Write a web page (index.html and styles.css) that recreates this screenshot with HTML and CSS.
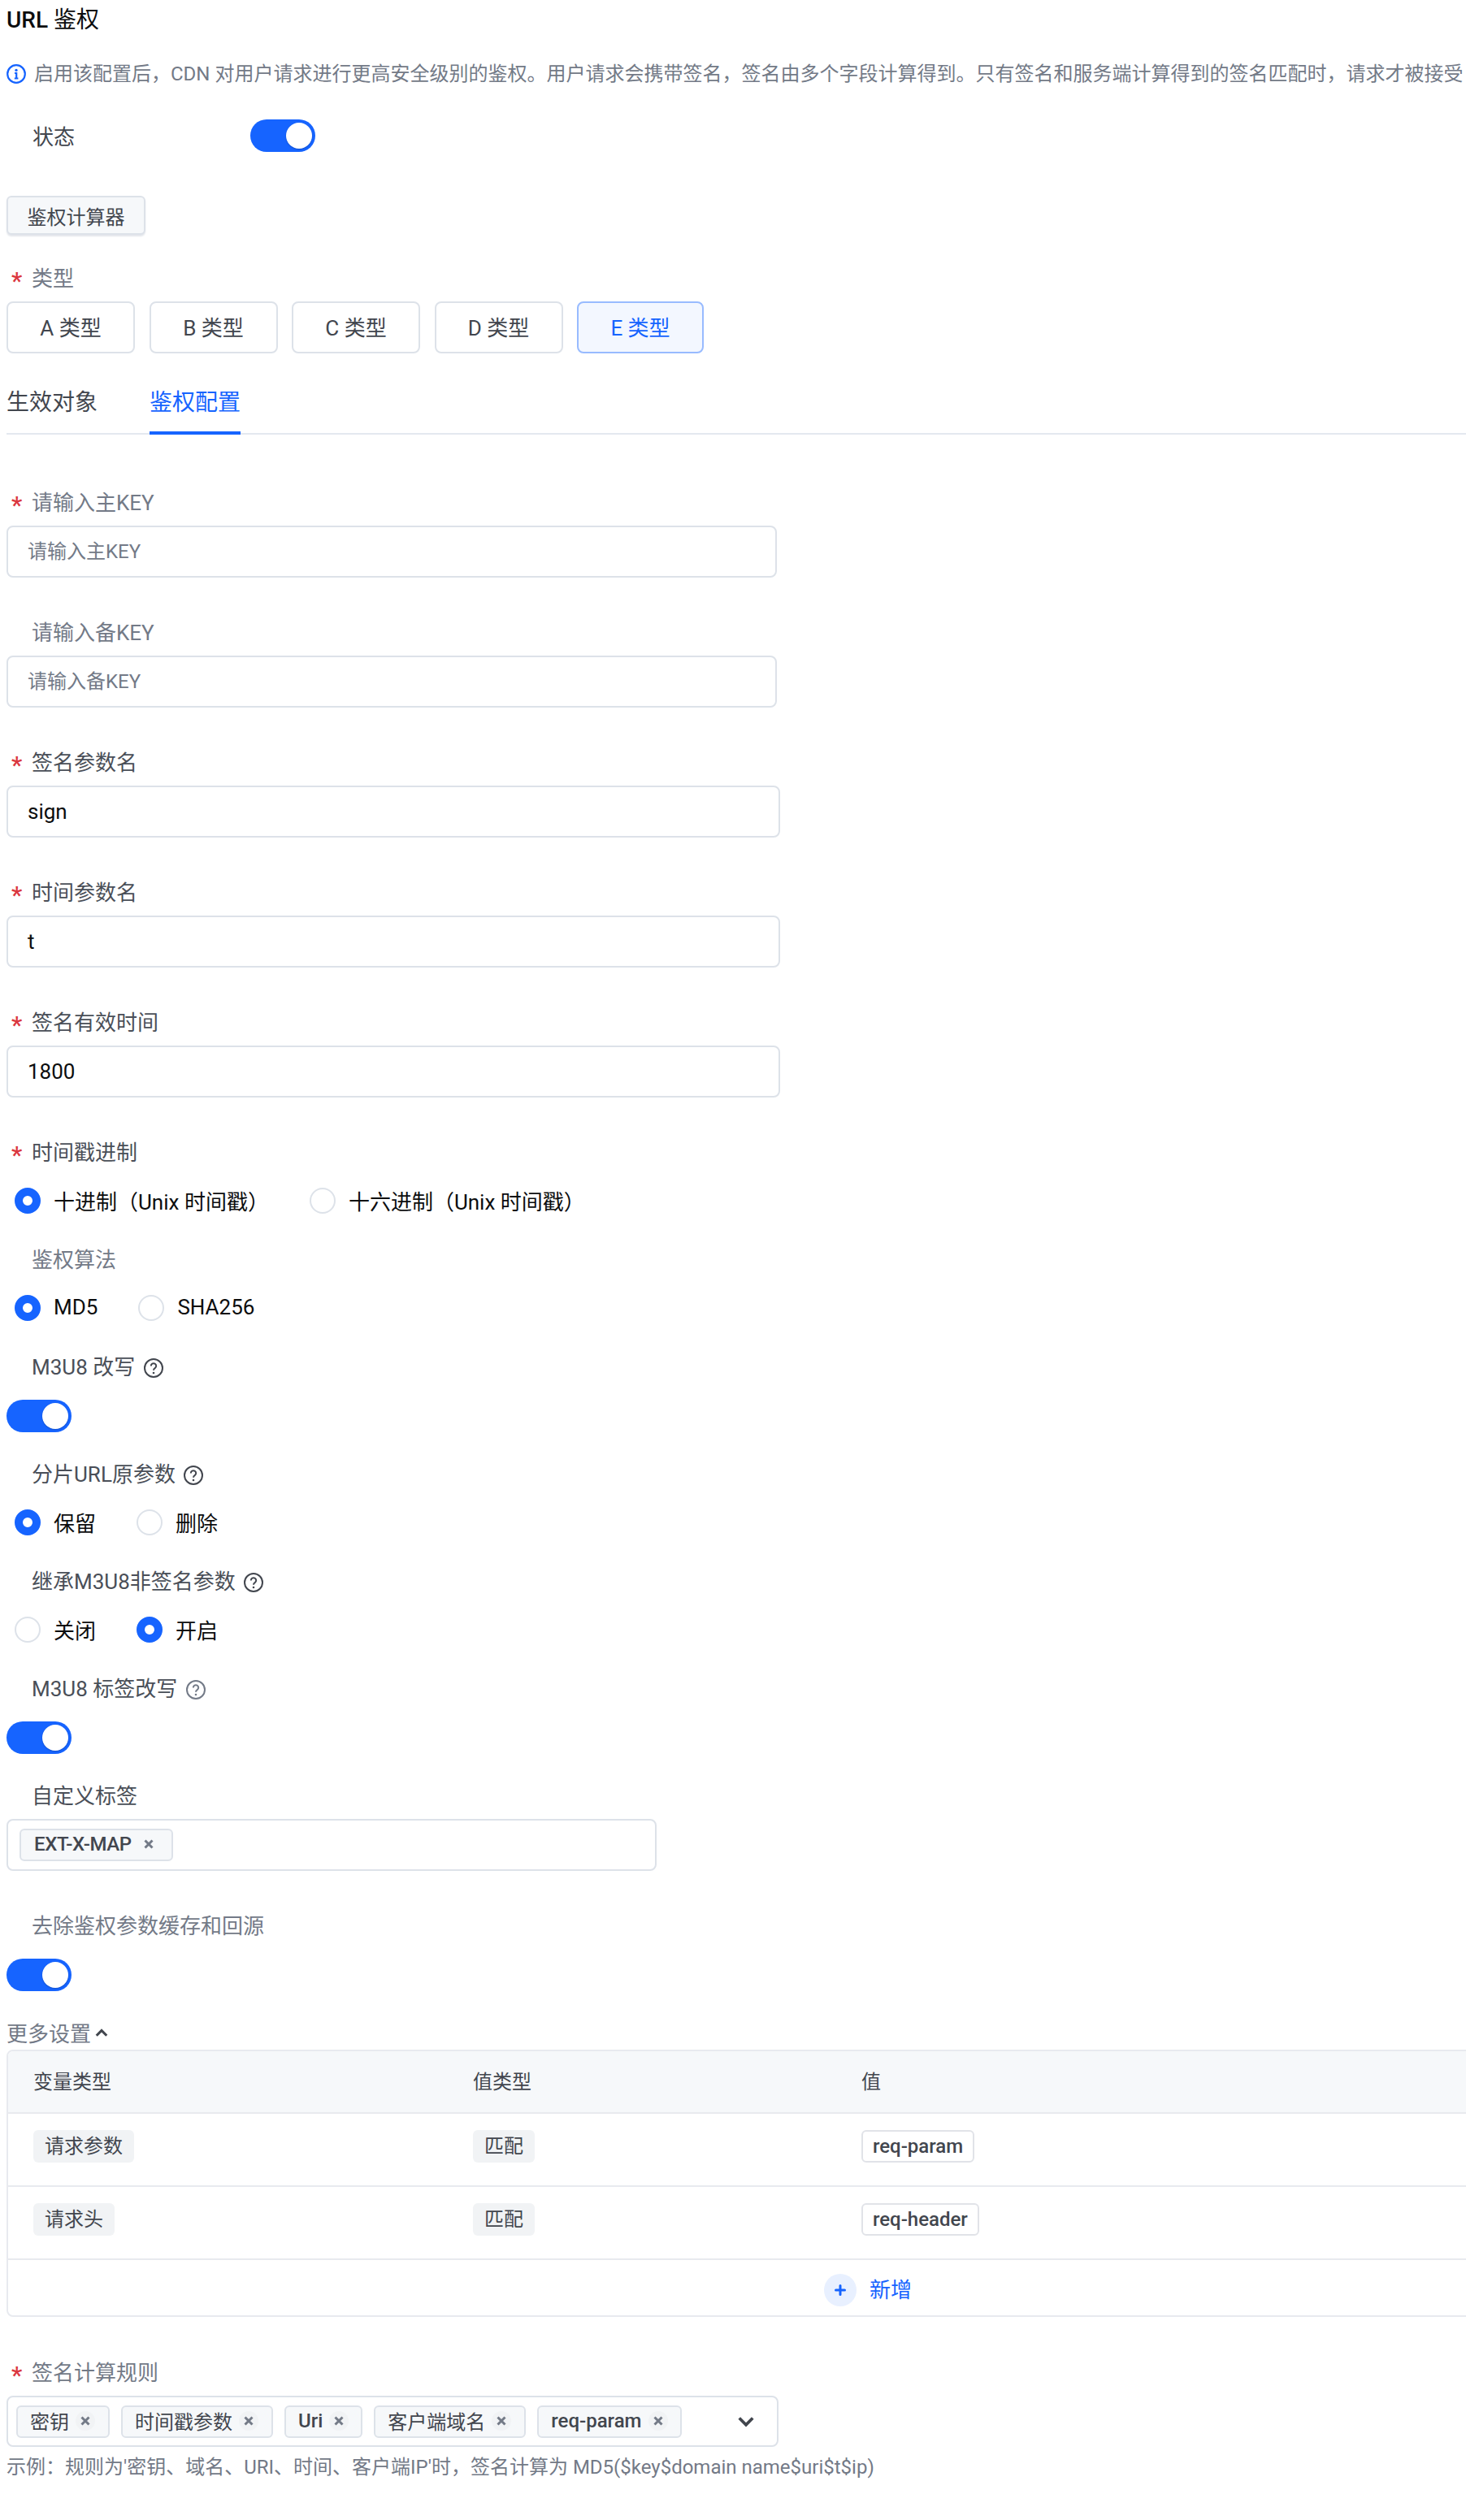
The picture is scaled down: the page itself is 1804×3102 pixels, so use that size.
FILE: index.html
```html
<!DOCTYPE html>
<html lang="zh-CN">
    <head>
        <meta charset="utf-8">
        <title>URL 鉴权</title>
        <meta name="viewport" content="width=device-width, initial-scale=1.0">
        <link rel="stylesheet" href="styles.css">
    </head>
    <body>
        <main class="page">
            <h1 class="title"><span class="title-latin">URL</span> 鉴权</h1>

            <p class="notice">
                <svg class="notice-icon" viewBox="0 0 24 24"><circle cx="12" cy="12" r="10.800" fill="none" stroke="#1664ff" stroke-width="2.200"/><circle cx="12" cy="7.400" r="1.700" fill="#1664ff"/><path d="M10 11h2.200v6.500M9.800 17.500h4.600" fill="none" stroke="#1664ff" stroke-width="2.200"/></svg>
                启用该配置后，CDN 对用户请求进行更高安全级别的鉴权。用户请求会携带签名，签名由多个字段计算得到。只有签名和服务端计算得到的签名匹配时，请求才被接受
            </p>

            <div class="status-row">
                <span class="status-label">状态</span>
                <span class="switch"><span class="knob"></span></span>
            </div>

            <button class="calc-btn">鉴权计算器</button>

            <div class="label label-type required">类型</div>
            <div class="type-list">
                <button class="type-btn">A 类型</button>
                <button class="type-btn">B 类型</button>
                <button class="type-btn">C 类型</button>
                <button class="type-btn">D 类型</button>
                <button class="type-btn type-active">E 类型</button>
            </div>

            <nav class="tabs">
                <a class="tab">生效对象</a>
                <a class="tab tab-active">鉴权配置</a>
            </nav>

            <section class="form">
                <div class="item">
                    <div class="label required">请输入主KEY</div>
                    <div class="input input-key placeholder">请输入主KEY</div>
                </div>
                <div class="item">
                    <div class="label">请输入备KEY</div>
                    <div class="input input-key placeholder">请输入备KEY</div>
                </div>
                <div class="item">
                    <div class="label dark required">签名参数名</div>
                    <div class="input">sign</div>
                </div>
                <div class="item">
                    <div class="label dark required">时间参数名</div>
                    <div class="input">t</div>
                </div>
                <div class="item">
                    <div class="label dark required">签名有效时间</div>
                    <div class="input">1800</div>
                </div>

                <div class="item item-radio">
                    <div class="label dark required">时间戳进制</div>
                    <div class="radios">
                        <label class="radio-opt"><span class="radio radio-on"></span>十进制（Unix 时间戳）</label>
                        <label class="radio-opt"><span class="radio"></span>十六进制（Unix 时间戳）</label>
                    </div>
                </div>
                <div class="item item-radio">
                    <div class="label">鉴权算法</div>
                    <div class="radios">
                        <label class="radio-opt"><span class="radio radio-on"></span>MD5</label>
                        <label class="radio-opt"><span class="radio"></span>SHA256</label>
                    </div>
                </div>
                <div class="item item-radio">
                    <div class="label dark">M3U8 改写 <svg class="help" viewBox="0 0 24 24"><circle cx="12" cy="12" r="11" fill="none" stroke="currentColor" stroke-width="2"/><path d="M8.800 9.400a3.200 3.200 0 1 1 4.900 2.700c-1.100 .7-1.700 1.300-1.700 2.600" fill="none" stroke="currentColor" stroke-width="2"/><circle cx="12" cy="18" r="1.300" fill="currentColor"/></svg></div>
                    <div class="switch-line"><span class="switch"><span class="knob"></span></span></div>
                </div>
                <div class="item item-radio">
                    <div class="label dark">分片URL原参数 <svg class="help" viewBox="0 0 24 24"><circle cx="12" cy="12" r="11" fill="none" stroke="currentColor" stroke-width="2"/><path d="M8.800 9.400a3.200 3.200 0 1 1 4.900 2.700c-1.100 .7-1.700 1.300-1.700 2.600" fill="none" stroke="currentColor" stroke-width="2"/><circle cx="12" cy="18" r="1.300" fill="currentColor"/></svg></div>
                    <div class="radios">
                        <label class="radio-opt"><span class="radio radio-on"></span>保留</label>
                        <label class="radio-opt"><span class="radio"></span>删除</label>
                    </div>
                </div>
                <div class="item item-radio">
                    <div class="label dark">继承M3U8非签名参数 <svg class="help" viewBox="0 0 24 24"><circle cx="12" cy="12" r="11" fill="none" stroke="currentColor" stroke-width="2"/><path d="M8.800 9.400a3.200 3.200 0 1 1 4.900 2.700c-1.100 .7-1.700 1.300-1.700 2.600" fill="none" stroke="currentColor" stroke-width="2"/><circle cx="12" cy="18" r="1.300" fill="currentColor"/></svg></div>
                    <div class="radios">
                        <label class="radio-opt"><span class="radio"></span>关闭</label>
                        <label class="radio-opt"><span class="radio radio-on"></span>开启</label>
                    </div>
                </div>
                <div class="item item-radio">
                    <div class="label dark">M3U8 标签改写 <svg class="help help-light" viewBox="0 0 24 24"><circle cx="12" cy="12" r="11" fill="none" stroke="currentColor" stroke-width="2"/><path d="M8.800 9.400a3.200 3.200 0 1 1 4.900 2.700c-1.100 .7-1.700 1.300-1.700 2.600" fill="none" stroke="currentColor" stroke-width="2"/><circle cx="12" cy="18" r="1.300" fill="currentColor"/></svg></div>
                    <div class="switch-line"><span class="switch"><span class="knob"></span></span></div>
                </div>
                <div class="item item-tags">
                    <div class="label dark">自定义标签</div>
                    <div class="tag-input">
                        <span class="chip chip-strong">EXT-X-MAP<svg class="close" viewBox="0 0 12 12"><path d="M1.500 1.500l9 9M10.500 1.500l-9 9"/></svg></span>
                    </div>
                </div>
                <div class="item item-radio">
                    <div class="label">去除鉴权参数缓存和回源</div>
                    <div class="switch-line"><span class="switch"><span class="knob"></span></span></div>
                </div>
            </section>

            <div class="more">更多设置<svg class="more-arrow" viewBox="0 0 16 16"><path d="M3 11l5-5 5 5"/></svg></div>

            <div class="table-wrap">
                <table class="vars">
                    <thead>
                        <tr><th class="col-a">变量类型</th><th class="col-b">值类型</th><th>值</th></tr>
                    </thead>
                    <tbody>
                        <tr>
                            <td><span class="tag">请求参数</span></td>
                            <td><span class="tag">匹配</span></td>
                            <td><span class="tag tag-line">req-param</span></td>
                        </tr>
                        <tr>
                            <td><span class="tag">请求头</span></td>
                            <td><span class="tag">匹配</span></td>
                            <td><span class="tag tag-line">req-header</span></td>
                        </tr>
                    </tbody>
                </table>
                <div class="add-row">
                    <span class="add-icon"><svg viewBox="0 0 14 14"><path d="M7 1.500v11M1.500 7h11"/></svg></span>
                    <span class="add-text">新增</span>
                </div>
            </div>

            <div class="label label-rule required">签名计算规则</div>
            <div class="rule-select">
                <span class="chip">密钥<span class="close-bg"><svg class="close" viewBox="0 0 12 12"><path d="M1.500 1.500l9 9M10.500 1.500l-9 9"/></svg></span></span>
                <span class="chip">时间戳参数<span class="close-bg"><svg class="close" viewBox="0 0 12 12"><path d="M1.500 1.500l9 9M10.500 1.500l-9 9"/></svg></span></span>
                <span class="chip chip-latin">Uri<span class="close-bg"><svg class="close" viewBox="0 0 12 12"><path d="M1.500 1.500l9 9M10.500 1.500l-9 9"/></svg></span></span>
                <span class="chip">客户端域名<span class="close-bg"><svg class="close" viewBox="0 0 12 12"><path d="M1.500 1.500l9 9M10.500 1.500l-9 9"/></svg></span></span>
                <span class="chip chip-latin">req-param<span class="close-bg"><svg class="close" viewBox="0 0 12 12"><path d="M1.500 1.500l9 9M10.500 1.500l-9 9"/></svg></span></span>
                <svg class="caret" viewBox="0 0 16 16"><path d="M2.500 5l5.500 5.500 5.500-5.500"/></svg>
            </div>
            <p class="hint">示例：规则为'密钥、域名、URI、时间、客户端IP'时，签名计算为 MD5($key$domain name$uri$t$ip)</p>
        </main>
    </body>
</html>
```

FILE: styles.css
```css
* {
    box-sizing: border-box;
}

html, body {
    margin: 0;
    background: #fff;
}

html {
    overflow: hidden;
}

body {
    font-family: Roboto, "Noto Sans CJK SC", sans-serif;
    font-size: 26px;
    color: #0c0d0e;
}

.page {
    width: 1804px;
    height: 3102px;
    padding: 0 0 0 8px;
    overflow: hidden;
}

.title {
    margin: 0;
    height: 48px;
    font-size: 28px;
    font-weight: 400;
    line-height: 50px;
}

.title-latin {
    font-weight: 500;
}

.notice {
    display: flex;
    align-items: center;
    gap: 10px;
    margin: 23px 0 0;
    height: 40px;
    line-height: 40px;
    font-size: 24px;
    color: #737a87;
    white-space: nowrap;
}

.notice-icon {
    width: 24px;
    height: 24px;
    flex: none;
}

.status-row {
    display: flex;
    align-items: center;
    margin-top: 36px;
    height: 40px;
}

.status-label {
    width: 300px;
    padding: 0 0 2px 32px;
    color: #42464e;
}

.switch {
    display: flex;
    justify-content: flex-end;
    align-items: center;
    width: 80px;
    height: 40px;
    padding-right: 4px;
    border-radius: 20px;
    background: #1664ff;
}

.knob {
    width: 32px;
    height: 32px;
    border-radius: 50%;
    background: #fff;
    box-shadow: 0 1px 2px rgba(0, 0, 0, 0.2);
}

.calc-btn {
    display: block;
    margin-top: 54px;
    width: 171px;
    height: 48px;
    padding: 0;
    border: 2px solid #dde2e9;
    border-radius: 6px;
    background: #f6f8fa;
    box-shadow: 0 2px 2px #e3e6eb;
    font: inherit;
    font-size: 24px;
    color: #42464e;
}

.label {
    position: relative;
    height: 40px;
    padding-left: 31px;
    line-height: 40px;
    color: #737a87;
}

.label.dark {
    color: #4a4f58;
}

.required::before {
    content: "*";
    position: absolute;
    left: 6px;
    top: 3px;
    color: #db373f;
    font-size: 30px;
    font-weight: 500;
}

.label-type {
    margin-top: 34px;
}

.type-list {
    display: flex;
    gap: 17.5px;
    margin-top: 8px;
}

.type-btn {
    width: 158px;
    height: 64px;
    padding: 0 0 4px;
    border: 2px solid #dde2e9;
    border-radius: 8px;
    background: #fff;
    font: inherit;
    font-size: 26px;
    color: #42464e;
}

.type-active {
    width: 156px;
    border-color: #98bbff;
    background: #f3f7ff;
    color: #1664ff;
}

.tabs {
    display: flex;
    gap: 64px;
    margin-top: 34px;
    height: 66px;
    border-bottom: 2px solid #e4e8ef;
}

.tab {
    height: 66px;
    line-height: 54px;
    font-size: 28px;
    color: #42464e;
}

.tab-active {
    border-bottom: 4px solid #1664ff;
    color: #1664ff;
}

.form {
    margin-top: 64px;
}

.item {
    margin-bottom: 48px;
}

.item-radio {
    margin-bottom: 22px;
}

.input {
    width: 952px;
    height: 64px;
    margin-top: 8px;
    padding: 0 24px;
    border: 2px solid #dde2e9;
    border-radius: 8px;
    line-height: 60px;
    color: #0c0d0e;
}

.input-key {
    width: 948px;
}

.placeholder {
    font-size: 24px;
    color: #737a87;
}

.radios {
    display: flex;
    gap: 40px;
    height: 62px;
    margin-top: 8px;
    align-items: center;
}

.radio-opt {
    display: flex;
    align-items: center;
    gap: 16px;
    padding: 0 0 2px 10px;
}

.radio {
    width: 32px;
    height: 32px;
    margin-top: 2px;
    border: 2px solid #dde2e9;
    border-radius: 50%;
    background: #fff;
}

.radio-on {
    border: 10px solid #1664ff;
}

.switch-line {
    display: flex;
    align-items: center;
    height: 62px;
    margin: 9px 0 -1px;
}

.help {
    width: 24px;
    height: 24px;
    margin-left: 4px;
    vertical-align: -4px;
    color: #42464e;
}

.help-light {
    color: #737a87;
}

.tag-input {
    display: flex;
    align-items: center;
    width: 800px;
    height: 64px;
    margin-top: 8px;
    padding: 0 14px;
    border: 2px solid #dde2e9;
    border-radius: 8px;
}

.chip {
    display: inline-flex;
    align-items: center;
    gap: 8px;
    height: 40px;
    padding: 0 16px 2px 15px;
    border: 2px solid #dde2e9;
    border-radius: 6px;
    background: #f6f8fa;
    font-size: 24px;
    color: #42464e;
}

.chip-latin {
    padding-right: 15px;
    font-weight: 500;
}

.chip-strong {
    gap: 15px;
    padding: 0 22px 2px 16px;
    font-weight: 500;
    letter-spacing: -0.4px;
}

.close {
    width: 12px;
    height: 12px;
    fill: none;
    stroke: #737a87;
    stroke-width: 3;
}

.close-bg {
    display: flex;
    align-items: center;
    justify-content: center;
    width: 24px;
    height: 24px;
    border-radius: 50%;
    background: #f1f3f5;
}

.more {
    display: flex;
    align-items: center;
    gap: 3px;
    height: 40px;
    padding-bottom: 3px;
    color: #737a87;
}

.more-arrow {
    width: 20px;
    height: 20px;
    fill: none;
    stroke: #42464e;
    stroke-width: 2.5;
}

.table-wrap {
    width: 2120px;
    border: 2px solid #e8eaef;
    border-radius: 8px;
    overflow: hidden;
}

.vars {
    width: 100%;
    border-collapse: collapse;
    table-layout: fixed;
    font-size: 24px;
}

.vars th {
    height: 76px;
    padding: 0 0 4px 31px;
    background: #f6f8fa;
    border-bottom: 2px solid #e8eaef;
    font-weight: 400;
    text-align: left;
    color: #42464e;
}

.col-a {
    width: 541px;
}

.col-b {
    width: 478px;
}

.vars td {
    height: 90px;
    padding: 0 0 8px 31px;
    border-bottom: 2px solid #e8eaef;
}

.tag {
    display: inline-block;
    height: 40px;
    padding: 0 14px;
    border-radius: 6px;
    background: #f1f3f5;
    line-height: 40px;
    color: #42464e;
}

.tag-line {
    padding: 0 12px;
    border: 2px solid #e1e3e8;
    background: #fff;
    line-height: 36px;
    font-weight: 500;
}

.add-row {
    display: flex;
    align-items: center;
    justify-content: center;
    gap: 16px;
    height: 68px;
    padding-top: 6px;
}

.add-icon {
    display: flex;
    align-items: center;
    justify-content: center;
    width: 40px;
    height: 40px;
    border-radius: 50%;
    background: #e8f0ff;
}

.add-icon svg {
    width: 14px;
    height: 14px;
    fill: none;
    stroke: #1664ff;
    stroke-width: 3;
    stroke-linecap: round;
}

.add-text {
    margin-top: -6px;
    color: #1664ff;
}

.label-rule {
    margin-top: 49px;
}

.rule-select {
    display: flex;
    align-items: center;
    gap: 14px;
    width: 950px;
    height: 63px;
    margin-top: 8px;
    padding: 0 26px 0 10px;
    border: 2px solid #dde2e9;
    border-radius: 8px;
}

.rule-select .caret {
    width: 24px;
    height: 24px;
    margin-left: auto;
    fill: none;
    stroke: #42464e;
    stroke-width: 2.5;
}

.hint {
    margin: 5px 0 0;
    line-height: 40px;
    font-size: 24px;
    color: #737a87;
}
```
